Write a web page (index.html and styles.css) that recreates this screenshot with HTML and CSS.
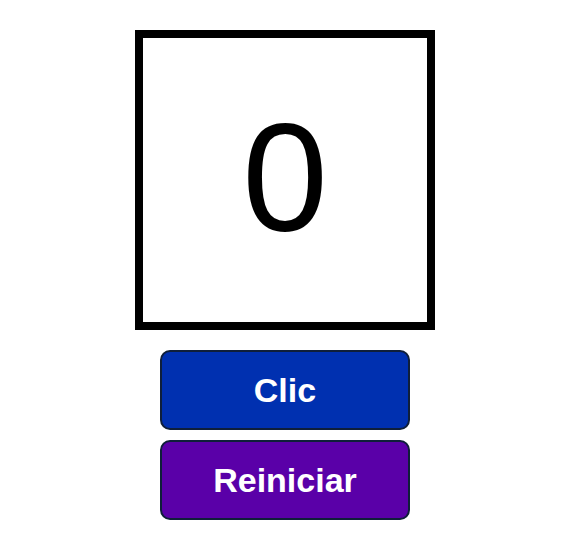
FILE: index.html
```html
<!DOCTYPE html>
<html lang="es">
<head>
<meta charset="utf-8">
<title>Contador</title>
<link rel="stylesheet" href="styles.css">
</head>
<body>
<main class="app">
  <div class="counter">0</div>
  <button class="btn btn-click">Clic</button>
  <button class="btn btn-reset">Reiniciar</button>
</main>
</body>
</html>
```
FILE: styles.css
```css
html, body {
  margin: 0;
  padding: 0;
  background: #ffffff;
}
body {
  font-family: "Liberation Sans", Arial, sans-serif;
}
.app {
  display: flex;
  flex-direction: column;
  align-items: center;
  padding: 30px 0 0 4px;
}
.counter {
  box-sizing: border-box;
  width: 300px;
  height: 300px;
  border: 8px solid #000;
  padding-bottom: 5px;
  display: flex;
  align-items: center;
  justify-content: center;
  font-size: 154px;
  color: #000;
  line-height: 1;
  margin-bottom: 20px;
}
.btn {
  box-sizing: border-box;
  width: 250px;
  height: 80px;
  border: 2px solid #0f1f3a;
  border-radius: 10px;
  color: #fff;
  font-family: "Liberation Sans", Arial, sans-serif;
  font-weight: bold;
  font-size: 34px;
  margin-bottom: 10px;
  padding: 0;
}
.btn-click {
  background: #0030b0;
}
.btn-reset {
  background: #5a00a8;
}
```
